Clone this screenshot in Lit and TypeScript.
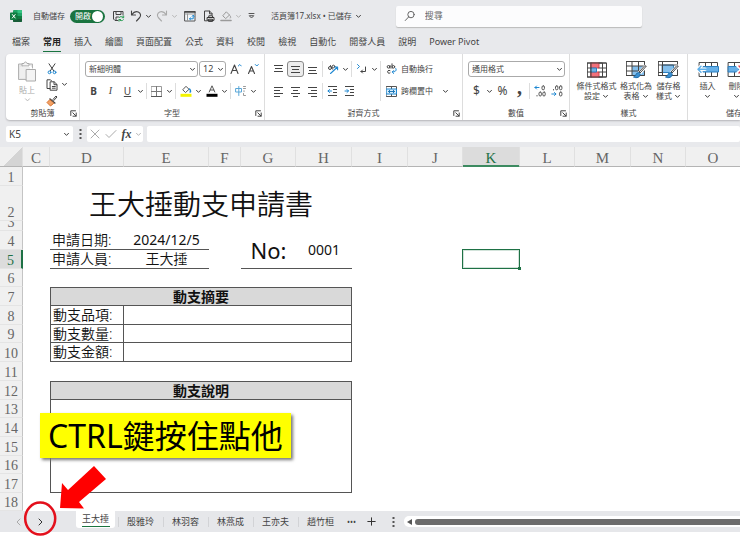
import { LitElement, html, svg, css, nothing } from "lit";
import type { TemplateResult } from "lit";
import { customElement, state } from "lit/decorators.js";
import { classMap } from "lit/directives/class-map.js";
import { styleMap } from "lit/directives/style-map.js";

const icon = (w: number, h: number, body: unknown) => html`<svg
  width=${w} height=${h} viewBox="0 0 ${w} ${h}" fill="none" stroke="#444" stroke-width="1"
  stroke-linecap="round" stroke-linejoin="round" aria-hidden="true">${body}</svg>`;

const lines = (rows: [number, number, number][]) =>
  svg`${rows.map(([x1, x2, y]) => svg`<path d="M${x1} ${y}H${x2}" stroke-linecap="butt"/>`)}`;

const I = {
  chevron: icon(7, 5, svg`<path d="M1.5 1.3 3.5 3.4 5.5 1.3"/>`),
  chevronPale: icon(7, 5, svg`<path d="M1.5 1.3 3.5 3.4 5.5 1.3" stroke="#b9b9b9"/>`),
  excel: icon(12, 12, svg`<g stroke="none"><rect x="3" y="0" width="9" height="12" rx="1" fill="#21a366"/>
    <path d="M7.5 0H11a1 1 0 0 1 1 1v2H7.5z" fill="#33c481"/><path d="M3 6h9v5a1 1 0 0 1-1 1H4a1 1 0 0 1-1-1z" fill="#185c37"/>
    <path d="M7.5 6H12v3H7.5z" fill="#107c41"/><rect x="0" y="2.5" width="7.5" height="7.5" rx=".8" fill="#107c41"/></g>
    <path d="M2.3 4.5 5.2 8M5.2 4.5 2.3 8" stroke="#fff"/>`),
  save: icon(13, 12, svg`<path d="M6 10.5H3L1.5 9V1.5h9.5V5M4 1.5v3h5v-3M4 10V7h2.5" />
    <path d="M11.5 7.5a2.6 2.6 0 0 0-4.3 0M7 9.5a2.6 2.6 0 0 0 4.4.3M11.7 6v1.7h-1.6M7 11.2V9.5h1.6" stroke="#2e9e57"/>`),
  undo: icon(12, 12, svg`<path d="M1.5 1v4h4M1.7 4.8C3.5 2.2 6 1 8.3 2c2.6 1.2 2.9 4 1 6L6.5 11" stroke-width="1.1"/>`),
  redo: icon(12, 12, svg`<path d="M10.5 1v4h-4M10.3 4.8C8.5 2.2 6 1 3.7 2c-2.6 1.2-2.9 4-1 6L5.5 11" stroke="#aaa" stroke-width="1.1"/>`),
  pivot: icon(12, 12, svg`<path d="M1 1.500h10v9.500H1z" fill="#f4f8fb" stroke="#555"/><path d="M1 2h10" stroke-width="1.600"/><path d="M3.500 4v7M1 4h10" stroke="#999"/>
    <path d="M9.200 5.500v3.300H5.700M8.200 6.300 9.200 5.200l1 1.100M6.500 7.900 5.500 8.800l1 .9" stroke="#1e88d2"/>`),
  preview: icon(12, 12, svg`<path d="M4 10.800H1.500V1h5l2.500 2.500V5M6.500 1v2.800H9"/><path d="M4.500 7.500h6.500v2.800H4.500zM5.800 7.500V5.800h3.800v1.700M5.800 9.200h3.800v2.200H5.800z" fill="#fff" stroke="#333"/>`),
  bucketGray: icon(12, 12, svg`<path d="M3 5.500 6.300 1.800 9.500 5 6 8.300zM9.800 5.500c1.400 1.500 1.200 2.500.3 2.500" stroke="#999"/><path d="M1 10.500h10" stroke="#9a9a9a" stroke-width="1.600"/>`),
  customise: icon(9, 8, svg`<path d="M2 1.500h5M2.500 4 4.500 6 6.500 4z" stroke="#555"/>`),
  search: icon(12, 12, svg`<circle cx="7" cy="4.600" r="3.200" stroke="#666"/><path d="M4.600 7 1.300 10.500" stroke="#666"/>`),
  paste: icon(20, 22, svg`<path d="M5 3H1.500v15.500H9M12 3h3.500v4" stroke="#b3b3b3" fill="#e6e6e6"/><path d="M5 4.500V2.500h2c.2-2 2.800-2 3 0h2v2z" stroke="#aaa" fill="#f5f5f5"/>
    <path d="M3 6h10v11H3z" fill="#efefef" stroke="none"/><path d="M9.500 8.500h9v11.500h-9z" fill="#f4f4f4" stroke="#aaa"/>`),
  cut: icon(10, 12, svg`<path d="M2 .8 6.800 8M8 .8 3.200 8"/><circle cx="2.500" cy="9.300" r="1.400" stroke="#1e88d2"/><circle cx="7.500" cy="9.300" r="1.400" stroke="#1e88d2"/>`),
  copy: icon(12, 12, svg`<path d="M4 9.500H1V.8h3.500L5.500 1.800"/><path d="M4.500 2.800h3.700l2.800 2.700v5.700H4.500zM8 3v2.700h2.800M6.300 7.500h3M6.300 9.200h3"/>`),
  painter: icon(12, 12, svg`<path d="M7 4.500 10 1l1 1-3.200 3.500" /><path d="M4 4l4.800 4" stroke="#444" stroke-width="1.600"/><path d="M3.500 5 1 7.500 4.500 11 7.500 8.500z" fill="#f2a266" stroke="#d9702b"/>`),
  grow: icon(12, 12, svg`<path d="M1 10.500 4.500 2 8 10.500M2.200 7.500h4.600" stroke-width="1.100"/><path d="M8.300 3 9.800 1.500 11.300 3" stroke="#1e88d2"/>`),
  shrink: icon(12, 12, svg`<path d="M1.500 10.500 4.500 3.500 7.500 10.500M2.600 8h3.800" stroke-width="1.100"/><path d="M8.300 1.500 9.800 3 11.300 1.500" stroke="#1e88d2"/>`),
  borders: icon(11, 11, svg`<path d="M.5.5h10v10H.5z" stroke="#999"/><path d="M5.500.5v10M.5 5.500h10" stroke="#777"/><path d="M.5 10.500h10" stroke="#555"/>`),
  fill: icon(12, 12, svg`<path d="M3 4.500 6 1.300 9 4.300 5.800 7.300z" stroke="#555"/><path d="M9.500 4c1.400 1.500 1.300 2.800.6 3" stroke="#1e88d2" stroke-width="1.400"/><path d="M.5 10.300h11" stroke="#f4f400" stroke-width="3" stroke-linecap="butt"/>`),
  fontColor: icon(12, 12, svg`<path d="M3.200 7 6 .8 8.800 7M4.200 5h3.600" stroke="#555"/><path d="M.5 10.300h11" stroke="#000" stroke-width="3" stroke-linecap="butt"/>`),
  phonetic: icon(12, 12, svg`<path d="M1 3.500h5.500v3.500H1zM3.800 1.500v9" stroke="#5aa7d8"/><path d="M8.500 1.500h2M8.500 3.500h2M9 5.700v1M8.500 8.500v2h2" stroke="#999"/>`),
  top: icon(11, 11, lines([[1, 10, 1.5], [2, 9, 4.5], [1, 10, 7.5]])),
  middle: icon(11, 11, lines([[1, 10, 2.5], [2, 9, 5.5], [1, 10, 8.5]])),
  bottom: icon(11, 11, lines([[1, 10, 3.5], [2, 9, 6.5], [1, 10, 9.5]])),
  left: icon(11, 11, lines([[1, 10, 1.5], [1, 7, 4.5], [1, 10, 7.5], [1, 7, 10.5]])),
  center: icon(11, 11, lines([[1, 10, 1.5], [3, 8, 4.5], [1, 10, 7.5], [3, 8, 10.5]])),
  right: icon(11, 11, lines([[1, 10, 1.5], [4, 10, 4.5], [1, 10, 7.5], [4, 10, 10.5]])),
  orient: icon(12, 12, svg`<circle cx="3" cy="5" r="1.500"/><path d="M3.500 2.500 5.500 6.200"/><circle cx="6.500" cy="3.500" r="1.300"/><path d="M3.500 10.500 10.500 4M7.800 4h2.800v2.700" stroke="#1e88d2" stroke-width="1.100"/>`),
  rtl: icon(11, 12, svg`<path d="M1.500 1.500 3.500 3.500 1.500 5.500" stroke="#1e88d2"/><path d="M9.500 4v4.500H5M6.500 7 5 8.500 6.500 10"/>`),
  outdent: icon(11, 11, svg`${lines([[1, 10, 0.5], [6, 10, 3.5], [6, 10, 6.5], [1, 10, 9.5]])}<path d="M4.500 5H1M2.500 3.500 1 5l1.500 1.500" stroke="#1e88d2"/>`),
  indent: icon(11, 11, svg`${lines([[1, 10, 0.5], [6, 10, 3.5], [6, 10, 6.5], [1, 10, 9.5]])}<path d="M1 5h3.500M3 3.500 4.500 5 3 6.500" stroke="#1e88d2"/>`),
  wrap: icon(12, 12, svg`<circle cx="2.500" cy="3.800" r="1.300"/><path d="M4 2.500v2.700M6 .8v4.400"/><circle cx="7.400" cy="3.800" r="1.300"/><path d="M4 7.600a1.500 1.500 0 1 0 0 2.400"/><path d="M9.800 5.500c1.300 2-.5 3.500-3.500 3.500M7.700 7.500 6.200 9l1.500 1.500" stroke="#1e88d2"/>`),
  merge: icon(12, 11, svg`<path d="M.5.5h10v10H.5zM5.500.5v10" stroke="#555"/><path d="M.5 3h10v5H.5z" fill="#d9edfa" stroke="#1e88d2"/><path d="M2.500 5.500h6M3.700 4.300 2.500 5.500l1.200 1.200M7.300 4.300l1.200 1.200-1.200 1.200" stroke="#1e78b8"/>`),
  incDec: icon(12, 12, svg`<g stroke="#555"><path d="M5 2.500H1M2.500 1 1 2.500 2.500 4" stroke="#1e88d2"/><rect x="8" y=".8" width="2.400" height="4" rx="1.200"/><rect x="5" y="7" width="2.400" height="4" rx="1.200"/><rect x="8.800" y="7" width="2.400" height="4" rx="1.200"/><path d="M3 10.500v.5"/></g>`),
  decDec: icon(12, 12, svg`<g stroke="#555"><rect x="4.500" y=".8" width="2.400" height="4" rx="1.200"/><rect x="8.500" y=".8" width="2.400" height="4" rx="1.200"/><path d="M2.500 4.500v.5"/><path d="M.8 9h4M3.500 7.500 5 9 3.500 10.500" stroke="#1e88d2"/><rect x="8.500" y="7" width="2.400" height="4" rx="1.200"/></g>`),
  condFmt: icon(20, 17, svg`<path d="M.5 1.500h19v14H.5z" fill="#fff"/><path d="M4 1.500h8v5H4zM4 10.500h8v5H4z" fill="#f2707a" stroke="#d9434f"/><path d="M4 6.500h5.500v4H4z" fill="#74b3e3" stroke="#2b7fc0"/>
    <path d="M12 1.500h3.500v14H12" fill="none"/><path d="M.5 1.500h19v14H.5zM.5 6.500H4M12 6.500h7.500M.5 10.500H4M12 10.500h7.500M4 1.500v14"/>`),
  fmtTable: icon(21, 18, svg`<path d="M.5.500h18v14H.5z" fill="#fff"/><path d="M6 5h12.500v9.500H6z" fill="#84bfec" stroke="none"/><path d="M.5.500h18v14H.5zM.5 5h18M.5 10h18M6 .5v14M12.500 .5v14"/>
    <path d="M19.500 5.500 13 12.500" stroke="#fff" stroke-width="4"/><path d="M20 5.500 14 12l-1-1 5.500-6z" fill="#fff"/><path d="M12.500 11.500c-3 0-2 3.500-5 4.500 3 1.500 7 .500 6.700-3z" fill="#3b8fd0" stroke="#1f6dab"/>`),
  cellStyle: icon(21, 18, svg`<path d="M.5.500h19v14H.5z" fill="#fff"/><path d="M4.500 4h11v7.500h-11z" fill="#84bfec" stroke="#2b7fc0"/><path d="M.5.500h19v14H.5zM.5 4h19M.5 11.500h4M4.500 .5v14"/>
    <path d="M19.500 5.500 13 12.500" stroke="#fff" stroke-width="4"/><path d="M20 5.500 14 12l-1-1 5.500-6z" fill="#fff"/><path d="M12.500 11.500c-3 0-2 3.500-5 4.500 3 1.500 7 .500 6.700-3z" fill="#3b8fd0" stroke="#1f6dab"/>`),
  insert: icon(22, 16, svg`<path d="M2.500.500h18v14h-18zM8.500.500v14M14.500.500v14"/><path d="M6 4.500h15.500v5.500H6z" fill="#66b0e8" stroke="#2b7fc0"/><path d="M8 7.300H1M4 4.300 1 7.300l3 3" stroke="#fff" stroke-width="3.500"/><path d="M11 7.300H1M4 4.300 1 7.300l3 3" stroke="#5fb0ea" stroke-width="1.500"/>`),
  remove: icon(22, 16, svg`<path d="M2.500.500h18v14h-18zM8.500.500v14M14.500.500v14"/><path d="M2.500 4.500H13v5.500H2.500z" fill="#66b0e8" stroke="#2b7fc0"/><path d="M12 4l8 7M20 4l-8 7" stroke="#fff" stroke-width="3.500"/><path d="M13 4l7 7M20 4l-7 7" stroke="#e0434f" stroke-width="1.400"/>`),
  launcher: icon(7, 7, svg`<path d="M.8 5.500V.8h4.700M2.800 2.800 6 6M6.200 3v3.200H3"/>`),
  dots: icon(3, 10, svg`<g fill="#555" stroke="none"><rect x=".5" y="0" width="2" height="2"/><rect x=".5" y="4" width="2" height="2"/><rect x=".5" y="8" width="2" height="2"/></g>`),
  cross: icon(10, 10, svg`<path d="M1 1l8 8M9 1l-8 8" stroke="#aaa"/>`),
  tick: icon(12, 10, svg`<path d="M1 5.500 4 8.500 11 1.500" stroke="#aaa"/>`),
  prev: icon(5, 8, svg`<path d="M4 1 1 4l3 3" stroke="#aaa"/>`),
  next: icon(5, 8, svg`<path d="M1 1l3 3-3 3" stroke="#333"/>`),
  plus: icon(9, 9, svg`<path d="M4.500.800v7.400M.800 4.500h7.400" stroke="#333"/>`),
};

const btn = (label: string, body: unknown, cls = "") =>
  html`<button class="btn ${cls}" type="button" aria-label=${label} title=${label}>${body}</button>`;
const drop = (label: string, pale = false) => btn(label, pale ? I.chevronPale : I.chevron, "drop");
const sep = html`<i class="sep"></i>`;

const COLS: [string, number][] = [
  ["C", 27], ["D", 74], ["E", 85], ["F", 32], ["G", 55], ["H", 56], ["I", 56],
  ["J", 55], ["K", 57], ["L", 55], ["M", 56], ["N", 55], ["O", 56],
];
const ROW_HEIGHTS = [19, 35, 10, 19, 19, 18, 19, 19, 18, 19, 19, 19, 18, 19, 19, 18, 19, 18];
const MENUS = ["檔案", "常用", "插入", "繪圖", "頁面配置", "公式", "資料", "校閱", "檢視", "自動化", "開發人員", "說明", "Power Pivot"];
const SHEETS = ["王大捶", "殷雅玲", "林羽容", "林燕成", "王亦夫", "趙竹桓"];

const base = css`
  * { box-sizing: border-box; }
  svg { display: block; flex: none; }
  button, input, select { font: inherit; color: inherit; margin: 0; padding: 0; border: 0; background: none; border-radius: 0; }
  .btn { display: flex; align-items: center; justify-content: center; flex: none; width: 17px; height: 16px; }
  .drop { width: 9px; }
`;

@customElement("title-bar")
class TitleBar extends LitElement {
  static styles = [base, css`
    :host { display: flex; align-items: center; height: 32px; padding-left: 10px; font-size: 8px; line-height: 12px; overflow: hidden; }
    .auto { display: flex; align-items: center; gap: 5px; margin: 0 5px 0 11px; }
    .switch { position: relative; display: flex; width: 35px; height: 13px; }
    .switch input { appearance: none; width: 35px; height: 13px; border-radius: 7px; background: #1a7440; }
    .switch input::after { content: ""; position: absolute; right: 2px; top: 1px; width: 11px; height: 11px; border-radius: 50%; background: #fff; }
    .switch span { position: absolute; left: 5px; top: 0; color: #fff; pointer-events: none; }
    .name { display: flex; align-items: center; gap: 3px; margin-left: 11px; white-space: nowrap; }
    .wide { width: 21px; }
    .search { display: flex; align-items: center; gap: 9px; width: 246px; height: 21px; margin-left: 34px; padding-left: 8px; background: #fcfcfd;
      border-radius: 2px; box-shadow: 0 1px 1px #bbb; font-size: 9px; }
    .search input { flex: 1; min-width: 0; outline: none; }
    .search input::placeholder { color: #666; opacity: 1; }
  `];
  render() {
    return html`${I.excel}
      <label class="auto"><span>自動儲存</span><span class="switch"><input type="checkbox" checked aria-label="自動儲存" /><span>開啟</span></span></label>
      ${btn("儲存", I.save)}${btn("復原", I.undo)}${drop("復原清單")}${btn("重做", I.redo)}${drop("重做清單", true)}
      ${btn("樞紐分析表", I.pivot, "wide")}${btn("預覽列印", I.preview)}${btn("填滿色彩", I.bucketGray)}${drop("色彩", true)}
      ${btn("自訂快速存取工具列", I.customise)}
      <button class="name" type="button">活頁簿17.xlsx • 已儲存 ${I.chevron}</button>
      <label class="search">${I.search}<input type="search" placeholder="搜尋" aria-label="搜尋" /></label>`;
  }
}

@customElement("excel-ribbon")
class ExcelRibbon extends LitElement {
  static styles = [base, css`
    :host { display: block; font-size: 8px; line-height: 10px; overflow: hidden; padding-bottom: 3px; }
    nav { display: flex; gap: 13px; height: 22px; padding-left: 12px; }
    nav button { position: relative; font-size: 9px; line-height: 20px; height: 20px; white-space: nowrap; }
    nav .current { font-weight: 700; color: #222; }
    nav .current::after { content: ""; position: absolute; left: 0; right: 0; bottom: 0; height: 1px; background: #1a7440; }
    .panel { display: flex; height: 66px; margin-left: 6px; background: #fff; border-radius: 4px 0 0 4px; box-shadow: 0 1px 2px #b4b4b8; }
    .group { position: relative; display: flex; flex-direction: column; flex: none; padding: 7px 5px 2px; border-right: 1px solid #ddd; margin: 0; }
    .group:last-child { border-right: 0; }
    .clip { width: 74px; } .font { width: 185px; } .align { width: 198px; } .num { width: 107px; } .styles { width: 118px; } .cells { width: 100px; }
    .body { display: flex; flex: 1; }
    .label { text-align: center; height: 10px; }
    .launch { position: absolute; right: 1px; bottom: 2px; width: 9px; height: 9px; }
    .stack { display: flex; flex-direction: column; gap: 6px; }
    .row { display: flex; align-items: center; height: 16px; }
    .sep { flex: none; width: 1px; height: 16px; margin: 0 1px; background: #ddd; }
    .tall { height: 40px; }
    .select { position: relative; display: flex; }
    .select select { appearance: none; width: 100%; height: 16px; padding: 0 3px; border: 1px solid #aaa; border-radius: 3px; background: #fff; }
    .select svg { position: absolute; right: 2px; top: 6px; pointer-events: none; }
    .family { width: 113px; margin-right: 1px; } .size { width: 27px; margin-right: 1px; font-size: 9px; } .format { width: 97px; }
    .on { border: 1px solid #888; border-radius: 3px; background: #ececec; }
    .glyph { font-size: 10px; } .b { font-weight: 700; } .i { font-style: italic; font-family: "Liberation Serif", serif; } .u { text-decoration: underline; }
    .sign { font-size: 12px; }
    .comma { font: 700 20px/10px "Liberation Serif", serif; padding-bottom: 8px; }
    .text { display: flex; align-items: center; gap: 3px; height: 16px; white-space: nowrap; }
    .grow { flex: 1; }
    .side { padding-left: 4px; flex: 1; }
    .big { display: flex; flex-direction: column; align-items: center; flex: none; white-space: nowrap; }
    .big svg { height: 18px; }
    .big .drop-line { display: flex; align-items: center; gap: 2px; height: 10px; }
    .big .drop-line svg { height: 5px; }
    .big .cap { margin-top: 2px; }
    .s1 { width: 43px; } .s2 { width: 36px; } .s3 { width: 29px; } .dim { color: #aaa; }
    .paste { width: 32px; }
    .paste svg:first-child { height: 22px; }
    .tools { gap: 1px; }
    .tools .row { height: 15px; }
  `];
  private big(cls: string, ic: TemplateResult, l1: string, l2: string) {
    return html`<button type="button" class="big ${cls}">${ic}<span class="cap">${l1}</span><span class="drop-line">${l2}${I.chevron}</span></button>`;
  }
  private group(cls: string, label: string, body: TemplateResult, launch = true) {
    return html`<section class="group ${cls}" aria-label=${label}><div class="body">${body}</div><div class="label">${label}</div>
      ${launch ? btn(label + "設定", I.launcher, "launch") : nothing}</section>`;
  }
  render() {
    return html`<nav>${MENUS.map((m) => html`<button type="button" class=${classMap({ current: m === "常用" })}>${m}</button>`)}</nav>
      <div class="panel">
        ${this.group("clip", "剪貼簿", html`
          <button type="button" class="big paste dim">${I.paste}<span class="cap">貼上</span><span class="drop-line">${I.chevronPale}</span></button>
          <div class="stack tools"><div class="row">${btn("剪下", I.cut)}</div><div class="row">${btn("複製", I.copy)}${drop("複製選項")}</div><div class="row">${btn("複製格式", I.painter)}</div></div>`)}
        ${this.group("font", "字型", html`<div class="stack">
          <div class="row"><span class="select family"><select aria-label="字型"><option>新細明體</option></select>${I.chevron}</span>
            <span class="select size"><select aria-label="字型大小"><option>12</option></select>${I.chevron}</span>${btn("放大字型", I.grow)}${btn("縮小字型", I.shrink)}</div>
          <div class="row">${btn("粗體", "B", "glyph b")}${btn("斜體", "I", "glyph i")}${btn("底線", "U", "glyph u")}${drop("底線樣式")}${sep}
            ${btn("框線", I.borders)}${drop("框線樣式")}${sep}${btn("填滿色彩", I.fill)}${drop("填滿選項")}${btn("字型色彩", I.fontColor)}${drop("色彩選項")}${sep}
            ${btn("注音標示", I.phonetic)}${drop("注音選項")}</div></div>`)}
        ${this.group("align", "對齊方式", html`<div class="stack">
            <div class="row">${btn("靠上", I.top)}${btn("置中", I.middle, "on")}${btn("靠下", I.bottom)}${sep}${btn("方向", I.orient)}${drop("方向選項")}${sep}${btn("文字方向", I.rtl)}${drop("文字方向選項")}</div>
            <div class="row">${btn("靠左", I.left)}${btn("水平置中", I.center)}${btn("靠右", I.right)}${sep}${btn("減少縮排", I.outdent)}${btn("增加縮排", I.indent)}</div>
          </div><i class="sep tall"></i>
          <div class="stack side"><div class="row"><button type="button" class="text">${I.wrap}自動換行</button></div>
            <div class="row"><button type="button" class="text">${I.merge}跨欄置中</button><span class="grow"></span>${drop("合併選項")}<span class="grow"></span></div></div>`)}
        ${this.group("num", "數值", html`<div class="stack">
          <div class="row"><span class="select format"><select aria-label="數值格式"><option>通用格式</option></select>${I.chevron}</span></div>
          <div class="row">${btn("貨幣", "$", "sign")}${drop("貨幣選項")}${btn("百分比", "%", "sign")}${btn("千分位", ",", "comma")}${sep}${btn("增加小數位數", I.incDec)}${btn("減少小數位數", I.decDec)}</div></div>`)}
        ${this.group("styles", "樣式", html`${this.big("s1", I.condFmt, "條件式格式", "設定")}${this.big("s2", I.fmtTable, "格式化為", "表格")}${this.big("s3", I.cellStyle, "儲存格", "樣式")}`, false)}
        ${this.group("cells", "儲存格", html`${this.big("s3", I.insert, "插入", "")}${this.big("s3", I.remove, "刪除", "")}`, false)}
      </div>`;
  }
}

@customElement("formula-bar")
class FormulaBar extends LitElement {
  static styles = [base, css`
    :host { display: flex; align-items: center; height: 24px; padding: 3px 0 5px 6px; font-size: 10px; line-height: 14px; }
    .box { display: flex; align-items: center; height: 16px; background: #fff; border-radius: 2px; }
    .name { width: 67px; } .name input { width: 56px; padding-left: 3px; }
    .tools { width: 56px; margin: 0 4px; }
    .dots { width: 6px; }
    .dots { margin-left: 4px; }
    .fx { font: italic 700 12px/14px "Liberation Serif", serif; }
    .narrow { width: 15px; }
    .formula { flex: 1; min-width: 0; }
    .formula input { width: 100%; height: 16px; }
  `];
  render() {
    return html`<div class="box name"><input value="K5" aria-label="名稱方塊" />${drop("名稱清單")}</div>
      ${btn("調整大小", I.dots, "dots")}
      <div class="box tools">${btn("取消", I.cross, "narrow")}${btn("輸入", I.tick)}${btn("插入函數", "fx", "fx narrow")}${drop("函數清單", true)}</div>
      <div class="box formula"><input aria-label="資料編輯列" /></div>`;
  }
}

@customElement("work-sheet")
class WorkSheet extends LitElement {
  static styles = [base, css`
    :host { display: block; overflow: hidden; background: #fff; color: #111; font-size: 14px; line-height: 16px; }
    table { table-layout: fixed; width: 100%; min-width: 741px; border-collapse: separate; border-spacing: 0; }
    .gutter { width: 23px; }
    th, td { padding: 0; font-weight: 400; white-space: nowrap; }
    th { font-family: "Liberation Serif", serif; color: #666; background: #f0f0f0; }
    thead th { height: 20px; font-size: 15px; border-bottom: 1px solid #b4b4b4; border-right: 1px solid #e0e0e0; padding-top: 2px; }
    thead .corner { background: linear-gradient(135deg, #f0f0f0 55%, #d4d4d4 55%); }
    thead .on { color: #1e7145; background: #dcdcdc; border-bottom-color: #3c8a60; box-shadow: inset 0 -1px #3c8a60; }
    tbody th { font-size: 14px; border-right: 1px solid #c4c4c4; border-bottom: 1px solid #e4e4e4; vertical-align: bottom; }
    tbody .on { color: #1e7145; background: #dcdcdc; border-right: 2px solid #1e7145; }
    .num { display: flex; align-items: flex-end; justify-content: center; overflow: hidden; line-height: 14px; }
    .title { font-size: 28px; line-height: 34px; font-weight: 350; text-align: center; }
    .key { padding-left: 2px; font-weight: 350; }
    .mid { text-align: center; }
    .light { font-weight: 350; }
    .no { font-size: 22px; line-height: 30px; text-align: center; }
    .under { border-bottom: 1px solid #555; }
    .left { border-left: 1px solid #555; }
    .right { border-right: 1px solid #555; }
    .over { border-top: 1px solid #555; }
    .head { background: #d9d9d9; font-weight: 700; text-align: center; }
    .active { position: relative; }
    .active::before { content: ""; position: absolute; inset: -1px 0 0 -1px; border: 1px solid #1e7145; outline: 1px solid #1e714533; outline-offset: -2px; }
    .active::after { content: ""; position: absolute; right: -1px; bottom: -1px; width: 3px; height: 3px; background: #1e7145; }
  `];
  private cells(n: number): TemplateResult {
    const rest = html`<td colspan="7"></td>`;
    const blank = html`<td colspan="5"></td>${rest}`;
    const item = (label: string) => html`<td class="key left right under">${label}</td><td class="right under" colspan="4"></td>${rest}`;
    switch (n) {
      case 2: return html`<td class="title" colspan="5">王大捶動支申請書</td>${rest}`;
      case 4: return html`<td class="key under">申請日期:</td><td class="mid under">2024/12/5</td><td></td>
        <td class="no under" rowspan="2">No:</td><td class="mid under" rowspan="2">0001</td>${rest}`;
      case 5: return html`<td class="key under">申請人員:</td><td class="mid light under">王大捶</td><td></td><td></td><td></td><td class="active"></td><td colspan="4"></td>`;
      case 7: return html`<td class="head over left right under" colspan="5">動支摘要</td>${rest}`;
      case 8: return item("動支品項:");
      case 9: return item("動支數量:");
      case 10: return item("動支金額:");
      case 12: return html`<td class="head over left right under" colspan="5">動支說明</td>${rest}`;
      case 13: return html`<td class="left right under" colspan="5" rowspan="5"></td>${rest}`;
      case 14: case 15: case 16: case 17: return rest;
      default: return blank;
    }
  }
  render() {
    return html`<table>
      <colgroup><col class="gutter" />${COLS.map(([, w], i) => html`<col style=${styleMap(i < COLS.length - 1 ? { width: w + "px" } : {})} />`)}</colgroup>
      <thead><tr><th class="corner"></th>${COLS.map(([c]) => html`<th scope="col" class=${classMap({ on: c === "K" })}>${c}</th>`)}</tr></thead>
      <tbody>${ROW_HEIGHTS.map((h, i) => html`<tr style=${styleMap({ height: h + "px" })}>
        <th scope="row" class=${classMap({ on: i === 4 })}><div class="num" style=${styleMap({ height: h - 1 + "px" })}>${i + 1}</div></th>
        <td></td>${this.cells(i + 1)}</tr>`)}</tbody></table>`;
  }
}

@customElement("sheet-tabs")
class SheetTabs extends LitElement {
  static styles = [base, css`
    :host { display: flex; align-items: center; height: 21px; background: #e6e7ea; font-size: 9px; line-height: 12px; overflow: hidden; }
    .arrows { display: flex; width: 73px; padding-left: 10px; gap: 5px; flex: none; }
    .tab { position: relative; flex: none; width: 45px; height: 21px; }
    .tab + .tab::before { content: ""; position: absolute; left: 0; top: 6px; height: 10px; border-left: 1px solid #d2d3d6; }
    .on span { display: block; width: 39px; height: 17px; margin: 0 auto 4px; padding-top: 2px; background: #fff; border-radius: 0 0 3px 3px; }
    .on i { display: block; width: 28px; height: 1px; margin: 1px auto 0; background: #1a7440; }
    .extra { width: 22px; }
    .more { font-size: 8px; }
    .scroll { display: flex; align-items: center; flex: 1; height: 11px; background: #fff; border-radius: 5px 0 0 5px; gap: 3px; padding-left: 3px; }
    .thumb { flex: 1; height: 6px; background: #6c6c6c; border-radius: 3px 0 0 3px; }
  `];
  @state() private current = 0;
  render() {
    return html`<div class="arrows">${btn("上一個", I.prev)}${btn("下一個", I.next)}</div>
      ${SHEETS.map((s, i) => html`<button type="button" class="tab ${classMap({ on: i === this.current })}" @click=${() => (this.current = i)}>
        ${i === this.current ? html`<span>${s}<i></i></span>` : s}</button>`)}
      ${btn("更多工作表", "•••", "more")}${btn("新增工作表", I.plus, "extra")}${btn("調整大小", I.dots, "extra")}
      <div class="scroll">${icon(5, 6, svg`<path d="M5 0v6L0 3z" fill="#555" stroke="none"/>`)}<div class="thumb"></div></div>`;
  }
}

@customElement("app-root")
class AppRoot extends LitElement {
  static styles = [base, css`
    :host { display: block; min-height: 100vh; overflow: hidden; background: #fff; color: #444;
      font-family: "Noto Sans", "Noto Sans CJK TC", sans-serif; }
    .chrome { background: #e8e9ec; }
    .book { position: relative; padding-bottom: 4px; }
    .callout { position: absolute; left: 40px; top: 266px; margin: 0; padding: 0 8px; font-size: 32px; line-height: 45px; white-space: nowrap;
      color: #000; background: #ff0; box-shadow: 2px 2px 3px #777; }
    .marks { position: absolute; left: 22px; top: 317px; pointer-events: none; }
  `];
  render() {
    return html`<header class="chrome"><title-bar></title-bar><excel-ribbon></excel-ribbon><formula-bar></formula-bar></header>
      <main class="book"><work-sheet></work-sheet><sheet-tabs></sheet-tabs>
        <p class="callout">CTRL鍵按住點他</p>
        <svg class="marks" width="86" height="72" viewBox="22 464 86 72" aria-hidden="true">
          <path d="M94 466 106 479 79 502 84 508.500 60 508 62 483 68 490z" fill="#f00"/>
          <ellipse cx="40.200" cy="518.600" rx="15" ry="16" fill="none" stroke="#e3101c" stroke-width="2.500"/>
        </svg>
      </main>`;
  }
}
